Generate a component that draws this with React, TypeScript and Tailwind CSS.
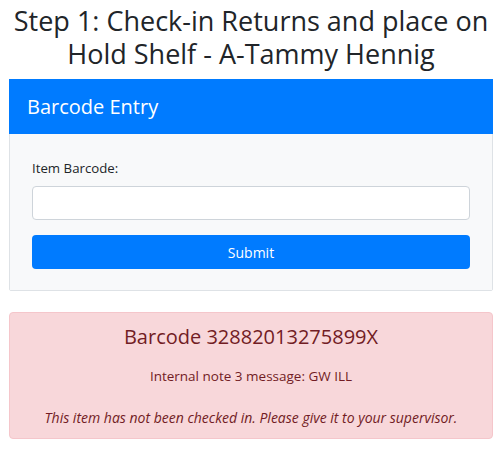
import React from "react";

export default function App() {
  return (
    <div
      className="w-[502px] min-h-[451px] bg-white px-[9px] pt-[4px] text-[#212529]"
      style={{ fontFamily: '"Open Sans", "Noto Sans", "Liberation Sans", sans-serif' }}
    >
      <h3 className="text-center text-[27px] leading-[33px] font-normal mb-[9px]">
        Step 1: Check-in Returns and place on Hold Shelf - A-Tammy Hennig
      </h3>
      <div className="border border-[#dee2e6] rounded-[2px]">
        <div className="h-[55px] bg-[#007bff] text-white flex items-center px-[18px] text-[20px] -m-px mb-0">
          Barcode Entry
        </div>
        <div className="bg-[#f8f9fa] px-[22px] pt-[24px] pb-[21px]">
          <label className="block text-[13.25px] leading-[20px] mb-[8px]">Item Barcode:</label>
          <input
            type="text"
            className="block w-full h-[34px] bg-white border border-[#ced4da] rounded-[4px] px-3 outline-none"
          />
          <button className="mt-[15px] w-full h-[34px] bg-[#007bff] text-white rounded-[4px] text-[14px]">
            Submit
          </button>
        </div>
      </div>
      <div className="mt-[21px] bg-[#f8d7da] border border-[#f5c6cb] rounded-[4px] text-[#721c24] text-center pt-[11px] pb-[10px]">
        <div className="text-[20px] leading-[26px]">Barcode 32882013275899X</div>
        <div className="text-[13.5px] leading-[20px] mt-[16px]">Internal note 3 message: GW ILL</div>
        <div className="text-[14px] leading-[20px] mt-[22px] italic">
          This item has not been checked in. Please give it to your supervisor.
        </div>
      </div>
    </div>
  );
}
